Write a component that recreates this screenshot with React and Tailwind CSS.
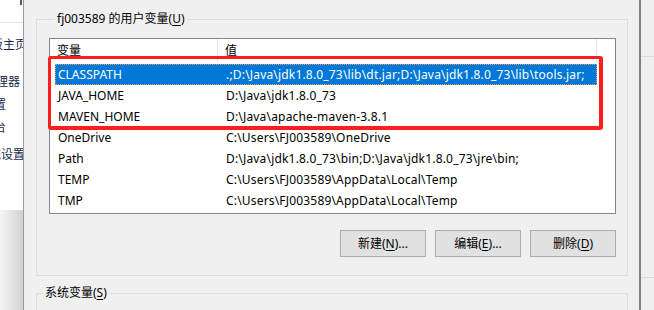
import React from "react";

const rows = [
  ["CLASSPATH", ".;D:\\Java\\jdk1.8.0_73\\lib\\dt.jar;D:\\Java\\jdk1.8.0_73\\lib\\tools.jar;", true],
  ["JAVA_HOME", "D:\\Java\\jdk1.8.0_73", false],
  ["MAVEN_HOME", "D:\\Java\\apache-maven-3.8.1", false],
  ["OneDrive", "C:\\Users\\FJ003589\\OneDrive", false],
  ["Path", "D:\\Java\\jdk1.8.0_73\\bin;D:\\Java\\jdk1.8.0_73\\jre\\bin;", false],
  ["TEMP", "C:\\Users\\FJ003589\\AppData\\Local\\Temp", false],
  ["TMP", "C:\\Users\\FJ003589\\AppData\\Local\\Temp", false],
];

function LeftLink({ text, end, cls }) {
  return (
    <div className={`flex justify-end whitespace-nowrap h-[18px] leading-[18px] ${end} ${cls}`}>
      <span>{text}</span>
    </div>
  );
}

function Btn({ label, k, rest }) {
  return (
    <div className="w-[86px] h-[27px] bg-[#e1e1e1] border border-[#adadad] flex items-center justify-center text-[12px] text-black">
      <span>
        {label}(<span className="underline underline-offset-2">{k}</span>){rest}
      </span>
    </div>
  );
}

export default function App() {
  return (
    <div className="w-[654px] h-[310px] flex overflow-hidden bg-[#f0f0f0] font-['Noto_Sans','Noto_Sans_CJK_SC',sans-serif] text-[12px] text-black">
      {/* left control panel strip */}
      <div className="w-[23px] shrink-0 h-full bg-white overflow-hidden flex flex-col text-[#1a2b4c]">
        <div className="h-[23px] shrink-0 border-b border-[#e3e3e3] flex justify-end">
          <div className="w-[2px] h-[5px] bg-[#5a5a5a] mr-[1px]" />
        </div>
        <LeftLink text="控制面板主页" end="w-[27px]" cls="mt-[13px]" />
        <LeftLink text="设备管理器" end="w-[20px]" cls="mt-[19px]" />
        <LeftLink text="远程设置" end="w-[6px]" cls="mt-[5px]" />
        <LeftLink text="系统保护台" end="w-[6px]" cls="mt-[5px]" />
        <LeftLink text="高级系统设置" end="w-[25px]" cls="mt-[9px]" />
        <div className="mt-auto h-[100px] bg-linear-to-r from-[#f6f6f6] to-[#d2d2d2]" />
      </div>

      {/* dialog */}
      <div className="w-[618px] shrink-0 h-full border-l border-l-[#9a9a9a] border-r-2 border-r-[#808080] bg-[#f0f0f0] pl-[12px] pt-[11px] flex flex-col overflow-hidden">
        <fieldset className="w-[592px] shrink-0 border border-[#dcdcdc] pl-[12px] pr-[11px] pb-[18px]">
          <legend className="ml-[6px] px-[2px] leading-[16px]">
            fj003589 的用户变量(<span className="underline underline-offset-2">U</span>)
          </legend>
          <div className="mt-[11px] w-[567px] h-[176px] border border-[#828790] bg-white relative flex flex-col">
            <div className="flex h-[23px] shrink-0">
              <div className="w-[168px] pl-[7px] border-r border-[#e5e5e5] flex items-center">变量</div>
              <div className="w-[379px] pl-[7px] border-r border-[#e5e5e5] flex items-center">值</div>
            </div>
            <div className="pt-[2px] flex flex-col">
              {rows.map(([n, v, sel]) => (
                <div
                  key={n}
                  className={`flex h-[21px] items-center ml-[5px] w-[542px] whitespace-nowrap ${
                    sel
                      ? "bg-[#0078d7] text-white outline-1 outline-dotted -outline-offset-1 outline-[#d9a15a]"
                      : ""
                  }`}
                >
                  <div className="w-[163px] pl-[3px]">{n}</div>
                  <div className="pl-[8px] tracking-[0.18px]">{v}</div>
                </div>
              ))}
            </div>
            <div className="absolute left-[-2px] top-[17px] w-[555px] h-[74px] border-t-[3px] border-l-[3px] border-r-[4px] border-b-[4px] border-[#ff1e1e] rounded-[3px] pointer-events-none" />
          </div>
          <div className="mt-[16px] flex justify-end gap-[9px]">
            <Btn label="新建" k="N" rest="..." />
            <Btn label="编辑" k="E" rest="..." />
            <Btn label="删除" k="D" rest="" />
          </div>
        </fieldset>
        <fieldset className="mt-[9px] w-[592px] h-[60px] shrink-0 border border-[#dcdcdc]">
          <legend className="ml-[6px] px-[2px] leading-[16px]">
            系统变量(<span className="underline underline-offset-2">S</span>)
          </legend>
        </fieldset>
      </div>

      {/* right background strip */}
      <div className="flex-1 h-full bg-[#f0f0f0] flex flex-col">
        <div className="h-[57px] border-b border-[#d9d9d9]" />
        <div className="h-[221px] border-b border-[#d9d9d9]" />
      </div>
    </div>
  );
}
